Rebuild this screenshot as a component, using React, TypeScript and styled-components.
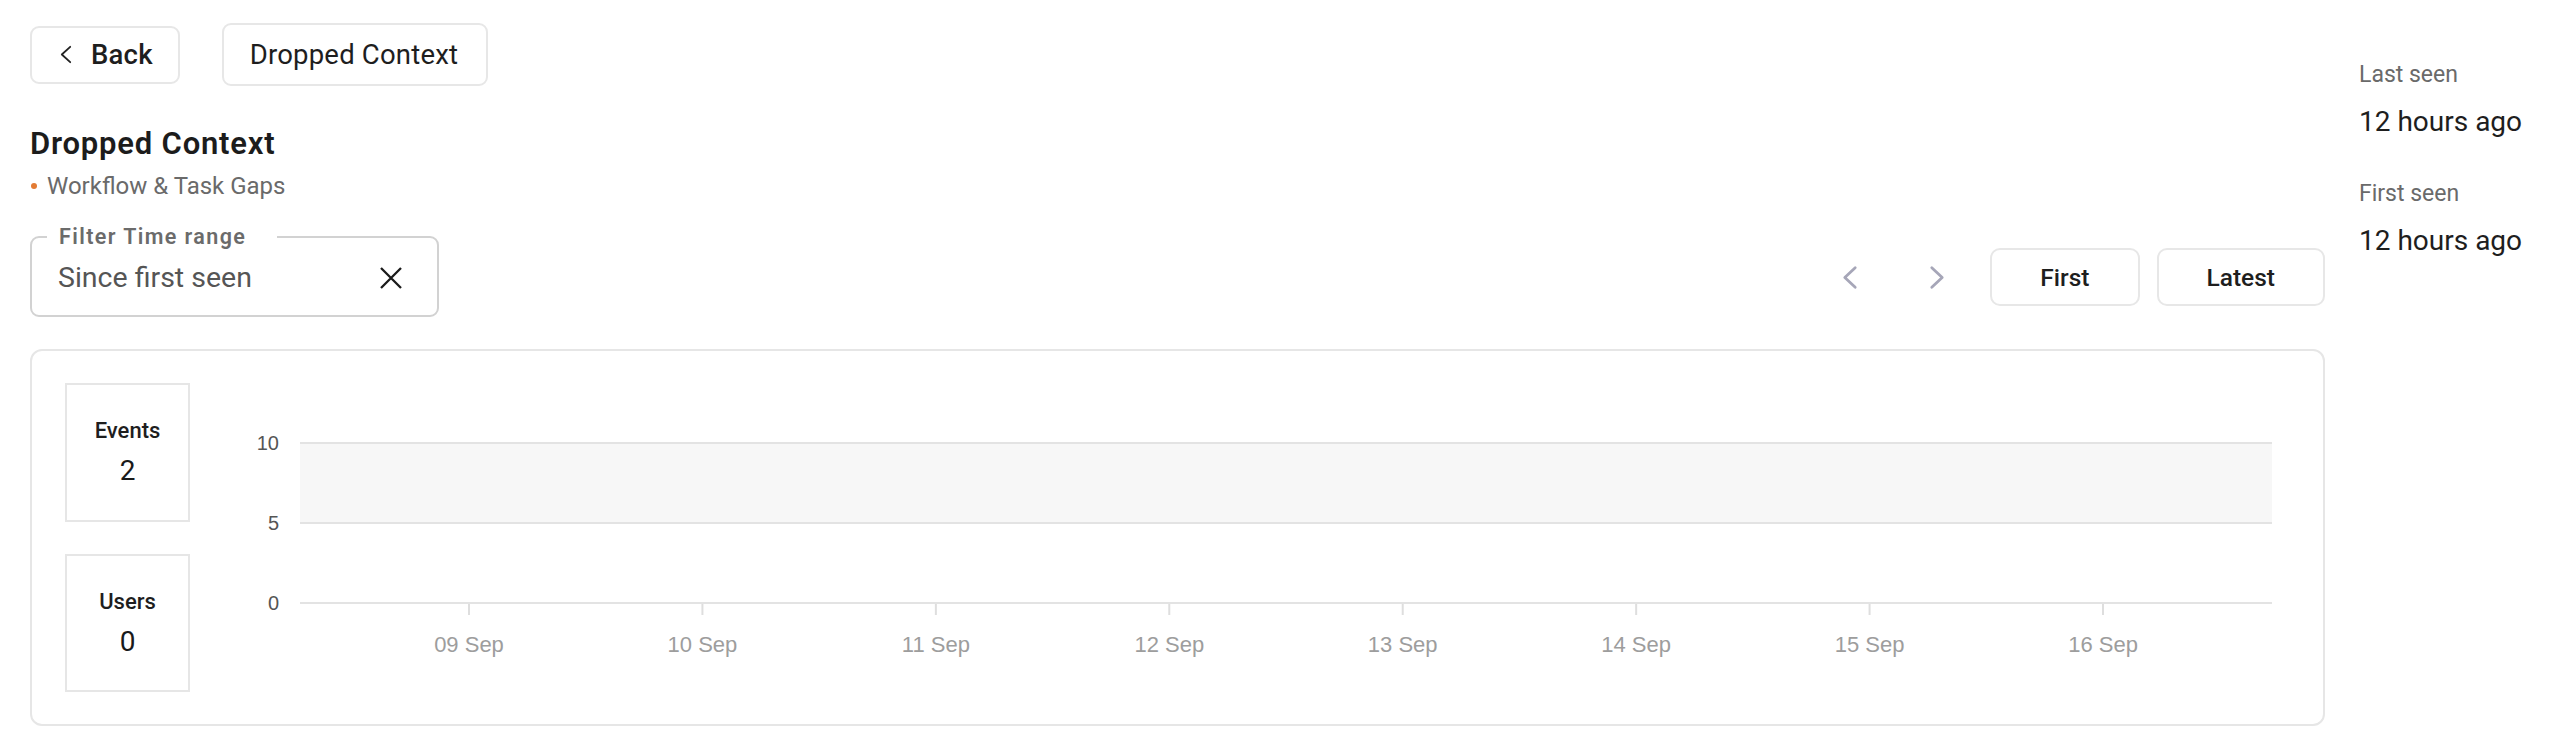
import React from "react";
import styled, { createGlobalStyle } from "styled-components";

const GlobalStyle = createGlobalStyle`
  html, body { margin: 0; padding: 0; background: #ffffff; }
  body { font-family: Roboto, "Noto Sans", Arial, sans-serif; color: #1f1f1f; }
  * { box-sizing: border-box; }
`;

const Page = styled.div`
  display: flex;
  align-items: flex-start;
  gap: 34px;
  padding: 23px 0 0 30px;
`;

const Main = styled.main`
  width: 2295px;
  display: flex;
  flex-direction: column;
`;

const TopBar = styled.div`
  display: flex;
  align-items: center;
  gap: 42px;
  height: 63px;
`;

const OutlineButton = styled.button<{ $h: number; $weight?: number }>`
  display: inline-flex;
  align-items: center;
  gap: 19px;
  height: ${(p) => p.$h}px;
  padding: 0 28px 0 26px;
  background: #fff;
  border: 2px solid #e7e7e7;
  border-radius: 9px;
  font-family: Roboto, "Noto Sans", Arial, sans-serif;
  font-size: 27.5px;
  font-weight: ${(p) => p.$weight ?? 400};
  letter-spacing: 0.2px;
  color: #1e1e1e;
  cursor: pointer;
`;

const BackButton = styled(OutlineButton)`
  padding: 0 25px 0 28px;
`;

const TitleBlock = styled.div`
  margin-top: 40px;
  display: flex;
  flex-direction: column;
  gap: 9px;
`;

const Title = styled.h1`
  margin: 0;
  font-size: 31px;
  line-height: 36px;
  font-weight: 600;
  letter-spacing: 0.8px;
  color: #1c1c1c;
`;

const Subtitle = styled.div`
  display: flex;
  align-items: center;
  gap: 10px;
  font-size: 24px;
  line-height: 30px;
  color: #6a6a6a;
  margin-left: 1px;
`;

const Dot = styled.span`
  width: 6px;
  height: 6px;
  border-radius: 50%;
  background: #e37b34;
  flex: none;
`;

const FilterRow = styled.div`
  margin-top: 24px;
  display: flex;
  justify-content: space-between;
  align-items: flex-end;
`;

const Field = styled.fieldset`
  width: 409px;
  margin: 0;
  padding: 0 34px 9px 26px;
  border: 2px solid #d2d2d2;
  border-radius: 9px;
  min-width: 0;
`;

const Legend = styled.legend`
  width: 230px;
  margin-left: -11px;
  padding: 0 0 0 12px;
  font-size: 21.5px;
  line-height: 24px;
  font-weight: 600;
  color: #6b6b6b;
  letter-spacing: 1.4px;
`;

const FieldRow = styled.div`
  height: 57px;
  display: flex;
  align-items: center;
  justify-content: space-between;
`;

const FieldValue = styled.span`
  font-size: 28.5px;
  color: #555;
`;

const Nav = styled.div`
  display: flex;
  align-items: center;
  gap: 17px;
  margin-bottom: 11px;
`;

const Arrows = styled.div`
  display: flex;
  align-items: center;
  gap: 39px;
  margin-right: 12px;
`;

const ArrowButton = styled.button`
  width: 48px;
  height: 58px;
  display: flex;
  align-items: center;
  justify-content: center;
  background: transparent;
  border: none;
  padding: 0;
  cursor: pointer;
`;

const NavButton = styled.button`
  height: 58px;
  padding: 0 48px;
  background: #fff;
  border: 2px solid #e7e7e7;
  border-radius: 10px;
  font-family: Roboto, "Noto Sans", Arial, sans-serif;
  font-size: 24.5px;
  font-weight: 500;
  color: #1e1e1e;
  cursor: pointer;
`;

const Card = styled.section`
  margin-top: 32px;
  height: 377px;
  border: 2px solid #e6e6e6;
  border-radius: 12px;
  display: flex;
  padding: 32px 0 32px 33px;
`;

const Stats = styled.div`
  display: flex;
  flex-direction: column;
  gap: 32px;
  flex: none;
`;

const StatBox = styled.div`
  width: 125px;
  height: 139px;
  border: 2px solid #e6e6e6;
  display: flex;
  flex-direction: column;
  align-items: center;
  justify-content: center;
  gap: 10px;
  padding-top: 2px;
`;

const StatLabel = styled.div`
  font-size: 22px;
  line-height: 26px;
  font-weight: 500;
  color: #1e1e1e;
`;

const StatValue = styled.div`
  font-size: 28px;
  line-height: 34px;
  color: #1a1a1a;
`;

const ChartWrap = styled.div`
  flex: 1;
  height: 309px;
`;

const ChartSvg = styled.svg`
  display: block;
  width: 2133px;
  height: 309px;
  font-family: "Liberation Sans", Arial, sans-serif;
`;

const Aside = styled.aside`
  padding-top: 38px;
  display: flex;
  flex-direction: column;
  gap: 41px;
`;

const Meta = styled.div`
  display: flex;
  flex-direction: column;
  gap: 16px;
`;

const MetaLabel = styled.div`
  font-size: 23px;
  line-height: 28px;
  color: #6a6a6a;
`;

const MetaValue = styled.div`
  font-size: 28px;
  line-height: 34px;
  color: #1e1e1e;
`;

const ChevronLeft = ({ color, w, h, sw }: { color: string; w: number; h: number; sw: number }) => (
  <svg width={w} height={h} viewBox={`0 0 ${w} ${h}`} fill="none">
    <polyline
      points={`${w - sw},${sw} ${sw},${h / 2} ${w - sw},${h - sw}`}
      stroke={color}
      strokeWidth={sw}
      strokeLinecap="round"
      strokeLinejoin="round"
    />
  </svg>
);

const ChevronRight = ({ color, w, h, sw }: { color: string; w: number; h: number; sw: number }) => (
  <svg width={w} height={h} viewBox={`0 0 ${w} ${h}`} fill="none">
    <polyline
      points={`${sw},${sw} ${w - sw},${h / 2} ${sw},${h - sw}`}
      stroke={color}
      strokeWidth={sw}
      strokeLinecap="round"
      strokeLinejoin="round"
    />
  </svg>
);

const CloseIcon = () => (
  <svg width="24" height="24" viewBox="0 0 24 24" fill="none">
    <path d="M2 2 L22 22 M22 2 L2 22" stroke="#1a1a1a" strokeWidth="2.3" />
  </svg>
);

const days = ["09 Sep", "10 Sep", "11 Sep", "12 Sep", "13 Sep", "14 Sep", "15 Sep", "16 Sep"];

const Chart = () => {
  const x0 = 110;
  const x1 = 2082;
  const ys = [
    { v: "10", y: 60 },
    { v: "5", y: 140 },
    { v: "0", y: 220 },
  ];
  return (
    <ChartSvg viewBox="0 0 2133 309">
      <rect x={x0} y={60} width={x1 - x0} height={80} fill="#f7f7f7" />
      {ys.map((g) => (
        <g key={g.v}>
          <line x1={x0} x2={x1} y1={g.y} y2={g.y} stroke="#e3e3e3" strokeWidth={2} />
          <text x={89} y={g.y + 7} textAnchor="end" fontSize={20} fill="#555">
            {g.v}
          </text>
        </g>
      ))}
      {days.map((d, i) => {
        const x = 279 + i * 233.43;
        return (
          <g key={d}>
            <line x1={x} x2={x} y1={221} y2={232} stroke="#dedede" strokeWidth={2} />
            <text x={x} y={269} textAnchor="middle" fontSize={22} fill="#9d9d9d">
              {d}
            </text>
          </g>
        );
      })}
    </ChartSvg>
  );
};

export default function App() {
  return (
    <>
      <GlobalStyle />
      <Page>
        <Main>
          <TopBar>
            <BackButton $h={58} $weight={500}>
              <ChevronLeft color="#222" w={12} h={19} sw={1.8} />
              Back
            </BackButton>
            <OutlineButton $h={63}>Dropped Context</OutlineButton>
          </TopBar>

          <TitleBlock>
            <Title>Dropped Context</Title>
            <Subtitle>
              <Dot />
              Workflow &amp; Task Gaps
            </Subtitle>
          </TitleBlock>

          <FilterRow>
            <Field>
              <Legend>Filter Time range</Legend>
              <FieldRow>
                <FieldValue>Since first seen</FieldValue>
                <CloseIcon />
              </FieldRow>
            </Field>
            <Nav>
              <Arrows>
                <ArrowButton aria-label="Previous">
                  <ChevronLeft color="#a6a6b8" w={16} h={25} sw={2.8} />
                </ArrowButton>
                <ArrowButton aria-label="Next">
                  <ChevronRight color="#a6a6b8" w={16} h={25} sw={2.8} />
                </ArrowButton>
              </Arrows>
              <NavButton>First</NavButton>
              <NavButton>Latest</NavButton>
            </Nav>
          </FilterRow>

          <Card>
            <Stats>
              <StatBox>
                <StatLabel>Events</StatLabel>
                <StatValue>2</StatValue>
              </StatBox>
              <StatBox>
                <StatLabel>Users</StatLabel>
                <StatValue>0</StatValue>
              </StatBox>
            </Stats>
            <ChartWrap>
              <Chart />
            </ChartWrap>
          </Card>
        </Main>

        <Aside>
          <Meta>
            <MetaLabel>Last seen</MetaLabel>
            <MetaValue>12 hours ago</MetaValue>
          </Meta>
          <Meta>
            <MetaLabel>First seen</MetaLabel>
            <MetaValue>12 hours ago</MetaValue>
          </Meta>
        </Aside>
      </Page>
    </>
  );
}
